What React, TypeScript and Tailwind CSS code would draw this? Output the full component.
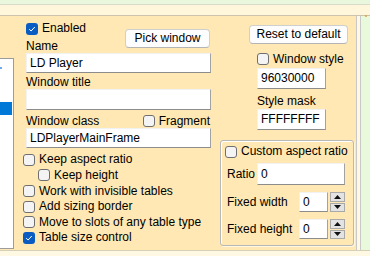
import type { ReactNode } from "react";

const FONT = "font-['Liberation_Sans',Arial,sans-serif]";

function Box({ checked = false }: { checked?: boolean }) {
  if (checked) {
    return (
      <span className="flex h-[12px] w-[12px] shrink-0 items-center justify-center rounded-[3px] bg-[#0a5cc2]">
        <svg width="8" height="8" viewBox="0 0 8 8">
          <path d="M1.2 4.2 L3.1 6 L6.8 2" fill="none" stroke="#ffffff" strokeWidth="1" />
        </svg>
      </span>
    );
  }
  return (
    <span className="block h-[12px] w-[12px] shrink-0 rounded-[3px] border border-[#6f6f6f] bg-[#f4f4f4]" />
  );
}

function Check({
  label,
  checked,
  className = "",
}: {
  label: string;
  checked?: boolean;
  className?: string;
}) {
  return (
    <div className={`flex items-center gap-[4px] whitespace-nowrap ${className}`}>
      <Box checked={checked} />
      <span>{label}</span>
    </div>
  );
}

function Field({ value = "", className = "" }: { value?: string; className?: string }) {
  return (
    <div
      className={`flex items-center border border-[#f2f2f2] border-r-[#a2a2a2] border-b-[#8c8c8c] bg-white pl-[3px] ${className}`}
    >
      {value}
    </div>
  );
}

function Btn({ children, className = "" }: { children: ReactNode; className?: string }) {
  return (
    <div
      className={`flex items-center justify-center rounded-[4px] border border-[#cfcfcf] border-b-[#b4b4b4] bg-[#fdfdfd] ${className}`}
    >
      {children}
    </div>
  );
}

function Spin() {
  return (
    <div className="flex h-[20px] w-[15px] flex-col gap-[1px]">
      {[0, 1].map((i) => (
        <div
          key={i}
          className="flex flex-1 items-center justify-center border border-[#a9a9a9] bg-[#e3e3e3]"
        >
          <svg width="7" height="4" viewBox="0 0 7 4">
            <path d={i === 0 ? "M3.5 0 L7 4 L0 4 Z" : "M0 0 L7 0 L3.5 4 Z"} fill="#111" />
          </svg>
        </div>
      ))}
    </div>
  );
}

export default function App() {
  return (
    <div className={`flex h-[256px] w-[370px] flex-col overflow-hidden bg-[#fff9e4] text-[12px] leading-[15px] text-black ${FONT}`}>
      <div className="h-[4px] bg-[#e9f8dc]" />
      <div className="h-[1px] bg-[#d9dcc9]" />
      <div className="h-[10px] bg-[#fff6dc]" />
      <div className="h-[1px] bg-[#cbc3ad]" />

      <div className="flex h-[234px]">
        <div className="flex w-[356px] bg-[#ffe8b3]">
          {/* list box, mostly scrolled out of view */}
          <div className="relative mt-[42px] h-[191px] w-[14px] border-t border-r border-b border-[#9c9c9c] bg-white">
            <div className="absolute left-0 top-[8px] h-[2px] w-[2px] rounded-full bg-[#3a8ee6]" />
            <div className="absolute left-0 top-[43px] h-[13px] w-[12px] bg-[#0078d7]" />
          </div>

          {/* left column */}
          <div className="ml-[9px] flex w-[188px] flex-col">
            <div className="flex">
              <div className="flex flex-col">
                <Check label="Enabled" checked className="ml-[3px] mt-[5px] h-[15px]" />
                <div className="ml-[3px] mt-[3px] h-[14px]">Name</div>
              </div>
              <Btn className="ml-auto mr-[1px] mt-[13px] h-[19px] w-[85px]">Pick window</Btn>
            </div>
            <Field value="LD Player" className="ml-[3px] h-[20px] w-[185px]" />
            <div className="ml-[3px] mt-[2px] h-[14px]">Window title</div>
            <Field className="ml-[3px] h-[21px] w-[185px]" />
            <div className="ml-[3px] mt-[4px] flex h-[14px] w-[184px] items-center">
              <span>Window class</span>
              <Check label="Fragment" className="ml-auto" />
            </div>
            <Field value="LDPlayerMainFrame" className="ml-[3px] h-[20px] w-[185px]" />
            <div className="mt-[4px] flex flex-col">
              <Check label="Keep aspect ratio" className="h-[15px]" />
              <Check label="Keep height" className="ml-[15px] h-[16px]" />
              <Check label="Work with invisible tables" className="h-[16px]" />
              <Check label="Add sizing border" className="h-[15px]" />
              <Check label="Move to slots of any table type" className="h-[16px]" />
              <Check label="Table size control" checked className="h-[15px]" />
            </div>
          </div>

          {/* right column */}
          <div className="ml-[9px] flex w-[134px] flex-col">
            <Btn className="ml-[29px] mt-[9px] h-[19px] w-[99px]">Reset to default</Btn>
            <div className="ml-[37px] mt-[8px] flex h-[14px] flex-col">
              <Check label="Window style" className="h-[14px]" />
            </div>
            <Field value="96030000" className="ml-[37px] mt-[2px] h-[21px] w-[69px]" />
            <div className="ml-[37px] mt-[5px] h-[15px]">Style mask</div>
            <Field value="FFFFFFFF" className="ml-[37px] h-[21px] w-[69px]" />

            <div className="mt-[10px] flex h-[106px] flex-col rounded-[3px] border border-[#b8b8b8] px-[4px] shadow-[inset_1px_1px_0_#ffffff,1px_1px_0_#fff7e0]">
              <Check label="Custom aspect ratio" className="mt-[3px] h-[15px]" />
              <div className="mt-[4px] flex h-[22px] items-center">
                <span className="ml-[2px]">Ratio</span>
                <Field value="0" className="ml-auto mr-[4px] h-[22px] w-[88px]" />
              </div>
              <div className="mt-[7px] flex h-[20px] items-center">
                <span className="ml-[2px]">Fixed width</span>
                <Field value="0" className="ml-auto h-[20px] w-[29px]" />
                <div className="ml-[2px] mr-[4px]">
                  <Spin />
                </div>
              </div>
              <div className="mt-[7px] flex h-[20px] items-center">
                <span className="ml-[2px]">Fixed height</span>
                <Field value="0" className="ml-auto h-[20px] w-[29px]" />
                <div className="ml-[2px] mr-[4px]">
                  <Spin />
                </div>
              </div>
            </div>
          </div>
        </div>
        <div className="w-[1px] bg-[#c8c8c8]" />
        <div className="w-[3px] bg-[#fff9e4]" />
        <div className="w-[1px] bg-[#c9c9c9]" />
        <div className="relative flex-1 bg-[#e9f9dc]">
          <div className="absolute left-[4px] top-[-1px] h-[2px] w-[2px] rounded-full bg-[#e0a040]" />
        </div>
      </div>
      <div className="h-[1px] bg-[#d6cfb8]" />
    </div>
  );
}
